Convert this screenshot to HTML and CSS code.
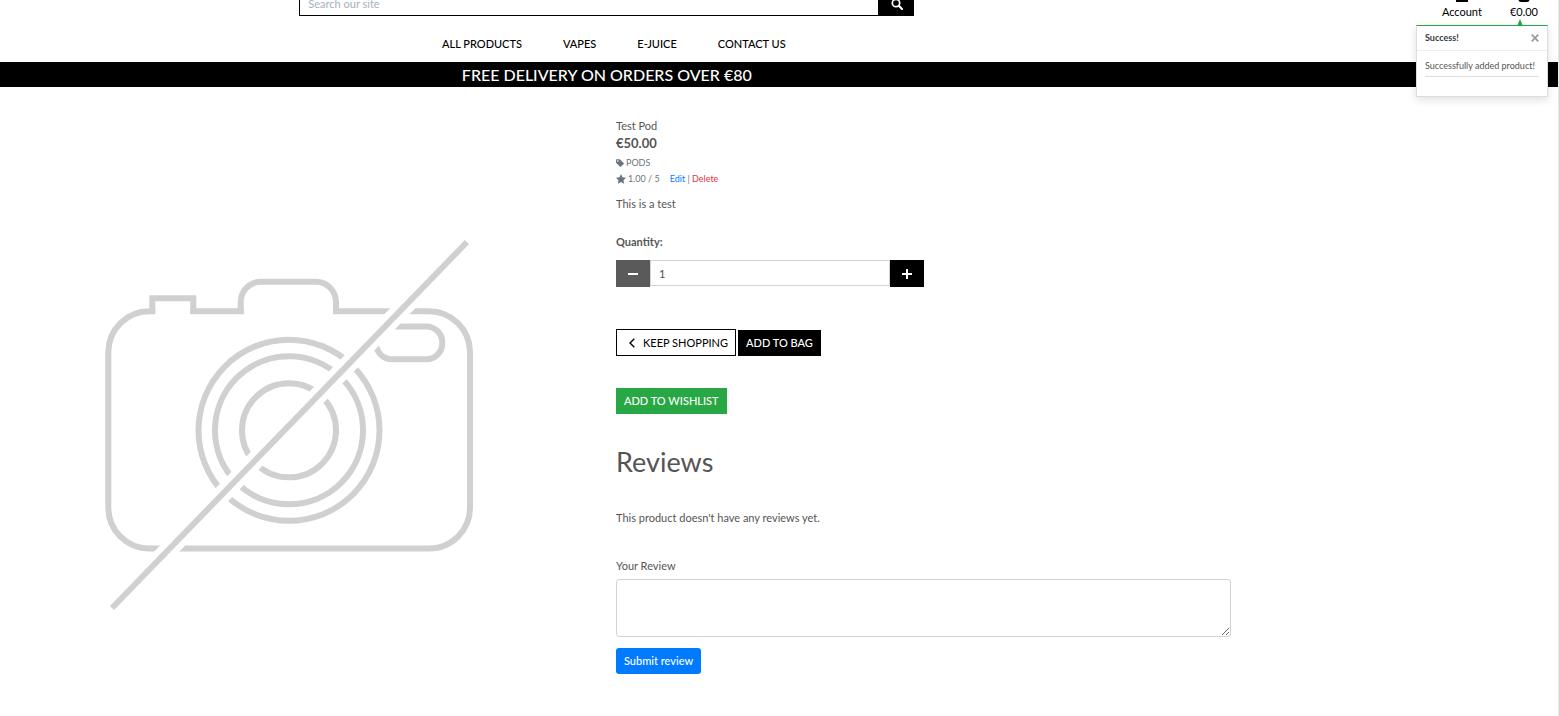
FILE: index.html
```html
<!DOCTYPE html>
<html lang="en">
<head>
<meta charset="utf-8">
<title>Test Pod</title>
<link rel="stylesheet" href="styles.css">
</head>
<body>
<header class="header">
  <div class="header-main">
    <form class="search" role="search">
      <input class="search-input" type="text" placeholder="Search our site" aria-label="Search our site">
      <button class="search-button" type="button" aria-label="Search">
        <svg class="icon" viewBox="0 0 12 12"><circle cx="5" cy="5" r="3.7" fill="none" stroke="currentColor" stroke-width="1.7"/><path d="M7.8 7.8 11 11" stroke="currentColor" stroke-width="2.1" stroke-linecap="round"/></svg>
      </button>
    </form>
    <nav class="nav">
      <a href="#">ALL PRODUCTS</a>
      <a href="#">VAPES</a>
      <a href="#">E-JUICE</a>
      <a href="#">CONTACT US</a>
    </nav>
  </div>
  <div class="links">
    <a href="#" class="link"><svg class="icon" viewBox="0 0 12 14"><circle cx="6" cy="4" r="3.3"/><path d="M0 14v-2q0-3 3-3h6q3 0 3 3v2z"/></svg>Account</a>
    <a href="#" class="link"><svg class="icon" viewBox="0 0 12 14"><path d="M3 5V3.500a3 3 0 0 1 6 0V5" fill="none" stroke="currentColor" stroke-width="1.400"/><path d="M.5 4.500h11v7q0 2.500-2.500 2.500H3Q.5 14 .5 11.500z"/></svg>€0.00</a>
  </div>
</header>
<div class="banner"><h4 class="banner-text">FREE DELIVERY ON ORDERS OVER €80</h4></div>

<aside class="toast" role="status">
  <div class="toast-head"><strong>Success!</strong><button class="close" type="button" aria-label="Close"><svg viewBox="0 0 8 8"><path d="M.7.7l6.600 6.600M7.300.7.7 7.300" stroke="currentColor" stroke-width="1.700"/></svg></button></div>
  <div class="toast-body"><p>Successfully added product!</p></div>
</aside>

<main class="product">
  <div class="picture">
    <svg viewBox="104 238 372 374" role="img" aria-label="No image available">
      <g fill="none" stroke="#d0d0d0" stroke-width="6">
        <path d="M149.500 311.300H152.300V298.300H193.300V311.300H240.700V302A20.300 20.300 0 0 1 261 281.700H316A20.300 20.300 0 0 1 336 302V311.300H429A41 41 0 0 1 470 352V507A41 41 0 0 1 429 548.500H149.500A41 41 0 0 1 108.300 507V352A41 41 0 0 1 149.500 311.300"/>
        <path d="M152.300 308V314M193.300 308V314M240.700 308V314M336 308V314"/>
        <rect x="376" y="326.500" width="66.300" height="32.800" rx="16"/>
        <circle cx="289" cy="430.300" r="90.500"/>
        <circle cx="289" cy="430.300" r="74"/>
        <circle cx="289" cy="430.300" r="47"/>
      </g>
      <path d="M467 242 112 608" stroke="#fff" stroke-width="18"/>
      <path d="M467 242 112 608" stroke="#d0d0d0" stroke-width="6"/>
    </svg>
  </div>
  <div class="details">
    <p class="name">Test Pod</p>
    <p class="price">€50.00</p>
    <p class="small"><svg class="glyph" viewBox="0 0 8 8"><path fill-rule="evenodd" d="M0 .8Q0 .2.7.2H3.800L7.700 4.100Q8.100 4.500 7.700 4.900L4.900 7.700Q4.500 8 4.100 7.700L0 3.700zM1.800 1.200a.75.75 0 1 0 .01 0z"/></svg>PODS</p>
    <p class="small"><svg class="glyph star" viewBox="0 0 10 10"><path d="M5 0 6.500 3.200 10 3.700 7.500 6.200 8.100 9.700 5 8 1.900 9.700 2.500 6.200 0 3.700 3.500 3.200z"/></svg>1.00 / 5 <span class="actions"><a class="edit" href="#">Edit</a> | <a class="delete" href="#">Delete</a></span></p>
    <p class="description">This is a test</p>

    <form>
      <label class="quantity-label" for="qty">Quantity:</label>
      <div class="quantity">
        <button class="step minus" type="button" aria-label="Decrease"><svg viewBox="0 0 10 10"><path d="M0 5h10" stroke="currentColor" stroke-width="2"/></svg></button>
        <input id="qty" type="text" inputmode="numeric" value="1">
        <button class="step" type="button" aria-label="Increase"><svg viewBox="0 0 10 10"><path d="M0 5h10M5 0v10" stroke="currentColor" stroke-width="2"/></svg></button>
      </div>
      <div class="purchase">
        <a class="button outline" href="#"><svg viewBox="0 0 6 10"><path d="M5.300.7 1 5l4.300 4.300" fill="none" stroke="currentColor" stroke-width="1.400"/></svg>KEEP SHOPPING</a>
        <button class="button dark" type="button">ADD TO BAG</button>
      </div>
    </form>
    <button class="button green" type="button">ADD TO WISHLIST</button>

    <h2 class="reviews-title">Reviews</h2>
    <p class="empty">This product doesn't have any reviews yet.</p>
    <form>
      <label class="review-label" for="review">Your Review</label>
      <textarea id="review" class="review"></textarea>
      <button class="button blue" type="button">Submit review</button>
    </form>
  </div>
</main>
</body>
</html>
```
FILE: styles.css
```css
* { box-sizing: border-box; }
body {
  margin: 0;
  min-height: 100vh;
  border-right: 1px solid #e9e9e9;
  background: #fff;
  color: #555;
  font: 11px/16px Lato, sans-serif;
  overflow: hidden;
}
p, h2, h4 { margin: 0; }
a { color: inherit; text-decoration: none; }
button, input, textarea { font: inherit; }
button { cursor: pointer; }
svg { display: block; fill: currentColor; }

.header {
  display: flex;
  justify-content: space-between;
  margin-top: -12px;
  height: 74px;
  color: #000;
}
.header-main { width: 77.9%; }
.search { display: flex; width: 615px; height: 28px; margin: 0 auto; }
.search-input {
  flex: 1;
  min-width: 0;
  padding: 4px 8px 0;
  border: 1px solid #000;
  border-radius: 0;
  outline: 0;
}
.search-input::placeholder { color: #a5b1bd; opacity: 1; }
.search-button {
  display: grid;
  place-items: center;
  width: 35px;
  padding: 3px 0 0;
  border: 0;
  background: #000;
  color: #fff;
}
.icon { width: 12px; height: 12px; }
.nav {
  display: flex;
  justify-content: center;
  gap: 41px;
  padding: 20px 0 0 14px;
  font-weight: 500;
}
.links { display: flex; gap: 28px; padding-right: 20px; }
.link { display: flex; flex-direction: column; align-items: center; }
.link .icon { height: 14px; margin-bottom: 2px; }

.banner { background: #000; color: #fff; }
.banner-text {
  width: 77.9%;
  text-align: center;
  font-size: 16px;
  font-weight: 500;
  line-height: 25px;
}

.toast {
  position: absolute;
  top: 25px;
  right: 11px;
  width: 132px;
  height: 72px;
  border: 1px solid #ddd;
  border-top-color: #28a745;
  background: #fff;
  box-shadow: 0 3px 8px rgba(0, 0, 0, .12);
  font-size: 9px;
}
.toast::before {
  content: "";
  position: absolute;
  right: 24px;
  bottom: 100%;
  border: 3px solid transparent;
  border-top: 0;
  border-bottom: 7px solid #28a745;
}
.toast-head {
  display: flex;
  align-items: center;
  justify-content: space-between;
  height: 25px;
  padding: 0 8px;
  border-bottom: 1px solid #eee;
  color: #343a40;
}
.close { padding: 0; border: 0; background: none; color: #999; }
.close svg { width: 8px; height: 8px; }
.toast-body { padding: 7px 8px; }
.toast-body p { padding-bottom: 2px; border-bottom: 1px solid #ddd; white-space: nowrap; }

.product {
  display: grid;
  grid-template-columns: 578fr 615fr 327fr;
  column-gap: 19px;
  padding-top: 31px;
}
.picture { padding: 120px 0 0 104px; }
.picture svg { width: 100%; max-width: 372px; }
.details { padding-left: 19px; margin-right: -19px; }
.price { padding-bottom: 1px; font-size: 13px; font-weight: 700; line-height: 18px; }
.small { display: flex; align-items: center; gap: 2px; padding-top: 3px; font-size: 9px; line-height: 13px; color: #6c757d; }
.glyph { width: 8px; height: 8px; }
.star { width: 10px; height: 10px; }
.actions { padding-left: 8px; }
.edit { color: #007bff; }
.delete { color: #dc3545; }
.description { padding-top: 11px; }
.quantity-label { display: block; padding: 22px 0 10px; font-weight: 700; }
.quantity { display: flex; width: 50%; height: 27px; }
.quantity input {
  flex: 1;
  min-width: 0;
  height: 26px;
  padding: 0 8px;
  border: 1px solid #ced4da;
  border-radius: 0;
  color: #495057;
}
.step { display: grid; place-items: center; width: 34px; padding: 0; border: 0; background: #000; color: #fff; }
.step svg { width: 10px; height: 10px; }
.minus { background: #5a5a5a; }
.purchase { display: flex; align-items: flex-end; gap: 2px; padding: 42px 0 32px; }
.button {
  display: flex;
  align-items: center;
  height: 26px;
  padding: 0 8px;
  border: 0;
  color: #fff;
  font-weight: 500;
}
.outline { height: 27px; padding: 0 7px 0 12px; gap: 8px; border: 1px solid #000; color: #000; font-weight: 400; }
.outline svg { width: 6px; height: 10px; }
.dark { background: #000; }
.green { background: #28a745; }
.blue { background: #007bff; border-radius: 3px; }
.reviews-title { padding-top: 32px; font-size: 27px; font-weight: 400; line-height: 32px; }
.empty { padding-top: 32px; }
.review-label { display: block; padding: 32px 0 5px; }
.review {
  display: block;
  width: 100%;
  height: 58px;
  margin-bottom: 11px;
  border: 1px solid #ced4da;
  border-radius: 3px;
  resize: vertical;
}
```
